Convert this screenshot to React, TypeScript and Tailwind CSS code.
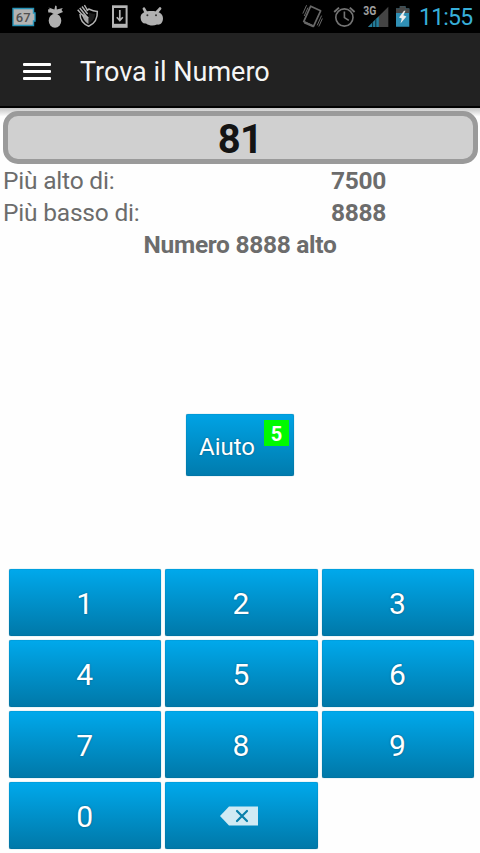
import type { ReactNode } from "react";

function StatusBar() {
  return (
    <div className="flex h-[33px] items-start justify-between bg-black pr-2">
      <div className="flex h-[33px]">
        <svg className="ml-[11px] h-[33px] w-[26px]" viewBox="11 0 26 33">
          <path d="M13 8.5H33.5V13H35V21H33.5V25.5H13Z" fill="#b3b3b3" stroke="#2794b8" strokeWidth="1.4" />
          <text x="23.2" y="21.6" textAnchor="middle" fontFamily="Roboto, sans-serif" fontSize="13" fontWeight="500" fill="#505050">67</text>
        </svg>
        <svg className="ml-[10px] h-[33px] w-[17px]" viewBox="47 0 17 33" fill="#b0b0b0">
          <ellipse cx="55" cy="20.7" rx="6.3" ry="7" />
          <path d="M54.5 14.5 51 12.4 48.3 12.4 48 9.5 50 9 48.5 7.6 54.4 9.6 55.3 5.5 56.6 6 56.8 9.6 62.8 8 61.5 10 63 12 57 14.5Z" />
        </svg>
        <svg className="ml-[13px] h-[33px] w-[22px]" viewBox="77 0 22 33" fill="none" stroke="#b3b3b3">
          <path d="M86.5 10.3 88.7 9C92 10.7 94.6 11.4 97.3 11.4C97.7 18.5 94.4 23.8 88.7 26.3C83.5 24 80 19.5 80 14" strokeWidth="1.5" />
          <path d="M88.7 12.4V23.5C93 21 94.8 18 95 13.8C92.7 13.7 90.5 13.2 88.7 12.4Z" fill="#1c1c1c" stroke="none" />
          <path d="M82 13.5 88.5 17V24C85 22 82.7 19 82 13.5Z" fill="#a5a5a5" stroke="none" />
          <path d="M77.7 9.7 84 17M79.7 8 88 18.3M82 6.5 87.6 14M84.4 5.2 88 11" strokeWidth="1.4" />
        </svg>
        <svg className="ml-[13px] h-[33px] w-[16px]" viewBox="112 0 16 33">
          <rect x="112" y="5.3" width="15.6" height="22.5" fill="#b5b5b5" />
          <rect x="114" y="8" width="11.6" height="15.8" fill="#050505" />
          <path d="M119.8 10V19.5M116.8 17.2 119.8 20.5 122.8 17.2" fill="none" stroke="#b5b5b5" strokeWidth="1.7" />
        </svg>
        <svg className="ml-[12px] h-[33px] w-[24px]" viewBox="140 0 24 33">
          <path d="M140.6 17.7C140.4 12.8 145.5 11 151.5 11C158 11 163 13.2 163 18.3C162.9 22.6 160.5 25.2 157 24.6C153.4 26 149.2 25.8 146 23.4C143 23.8 140.8 21.8 140.6 17.7Z" fill="#b1b1b1" />
          <path d="M146 12.5 144 8.8M157 12 160 8.6" stroke="#b1b1b1" strokeWidth="2.8" strokeLinecap="round" />
          <circle cx="147.4" cy="15.2" r="1" fill="#333" /><circle cx="156" cy="15.2" r="1" fill="#333" />
        </svg>
      </div>
      <div className="flex h-[33px]">
        <svg className="h-[33px] w-[22px]" viewBox="301 0 22 33" fill="none" stroke="#686868">
          <path d="M310.7 6.2 320.6 10.8 313.6 26.2 303.7 21.6Z" strokeWidth="1.7" strokeLinejoin="round" />
          <path d="M304.4 22.4 313.8 26.6" strokeWidth="2.2" />
          <path d="M306.6 5.2 302.8 13.6M308 7.6 304.2 16M321.6 15.6 317.2 25.4M322.4 18.5 318.8 26.5" strokeWidth="1" />
        </svg>
        <svg className="ml-[10px] h-[33px] w-[23px]" viewBox="333 0 23 33" fill="none" stroke="#747474">
          <circle cx="344.4" cy="17.5" r="8.6" strokeWidth="1.6" />
          <path d="M344.4 11.5V17.6L348.8 20.4" strokeWidth="1.6" />
          <path d="M334.2 12 339 7.6M349.8 7.6 354.6 12" strokeWidth="1.9" />
        </svg>
        <svg className="ml-[6px] h-[33px] w-[27px]" viewBox="362 0 27 33">
          <path d="M388.3 6.7V27H368Z" fill="#444" />
          <path d="M378.8 16.2V27H368Z" fill="#247f9e" />
          <path d="M372.6 22V27M375.8 19V27" stroke="#0c2832" strokeWidth="1" />
          <text x="363.2" y="15.4" fontFamily="Roboto, sans-serif" fontWeight="700" fontSize="12.5" fill="#a0a0a0" textLength="13" lengthAdjust="spacingAndGlyphs">3G</text>
        </svg>
        <svg className="ml-[6px] h-[33px] w-[16px]" viewBox="395 0 16 33">
          <path d="M396 8.5H399.8V6.3H405.5V8.5H409.3V26.7H396Z" fill="#3090b5" />
          <path d="M396 8.5H399.8V6.3H405.5V8.5H409.3V13H396Z" fill="#484848" />
          <path d="M404 10.8 399 17.4 401.8 18.6 400.5 23.5 406.4 16.5 403.3 15.3 405.5 10.8Z" fill="#eee" />
        </svg>
        <span className="ml-[8px] w-[53px] pt-[5px] text-[23px] leading-[26px] tracking-[-0.8px] text-[#38afd9]">11:55</span>
      </div>
    </div>
  );
}

function Key({ children }: { children: ReactNode }) {
  return (
    <button className="flex h-[67px] items-center justify-center rounded-[2px] bg-linear-to-b from-[#00a9ec] to-[#0078a8] pt-[2px] pr-[1px] text-[30px] leading-none text-white shadow-[inset_0_0_1px_#075576,0_0_1px_#4ba0c0] [text-shadow:0_0_2px_#07567a]">
      {children}
    </button>
  );
}

export default function App() {
  return (
    <div className="flex h-[853px] w-[480px] flex-col overflow-hidden bg-[#fefefe] font-[Roboto,sans-serif]">
      <StatusBar />
      <header className="flex h-[75px] items-center border-b-2 border-black bg-[#222] pt-[3px]">
        <div className="ml-[23px] flex w-[28px] flex-col gap-[4px]">
          <span className="h-[3px] rounded-[1px] bg-white" />
          <span className="h-[3px] rounded-[1px] bg-white" />
          <span className="h-[3px] rounded-[1px] bg-white" />
        </div>
        <h1 className="ml-[29px] pt-[1px] text-[27px] leading-8 text-[#f5f5f5]">Trova il Numero</h1>
      </header>
      <div className="h-[57px] shrink-0 bg-linear-to-b from-[#c5c5c5] via-[#fefefe] via-15% to-[#fefefe] px-[2.5px] pt-[2.5px]">
        <div className="flex h-[53px] items-center justify-center rounded-[15px] border-[5px] border-[#9a9a9a] bg-[#d0d0d0] pt-[5px] text-[40px] leading-none font-bold tracking-[-0.8px] text-[#141414]">81</div>
      </div>
      <section className="text-[24.5px] leading-[32px] text-[#6c6c6c]">
        <div className="flex"><span className="w-[331px] pl-[3px] tracking-[-0.2px]">Più alto di:</span><b className="tracking-[-0.3px]">7500</b></div>
        <div className="flex"><span className="w-[331px] pl-[3px] tracking-[-0.2px]">Più basso di:</span><b className="tracking-[-0.3px]">8888</b></div>
        <p className="text-center font-bold tracking-[-0.3px]">Numero 8888 alto</p>
      </section>
      <main className="flex grow flex-col justify-between pb-[4px]">
        <button className="mt-[153px] ml-[186px] flex h-[62px] w-[108px] items-start rounded-[2px] bg-linear-to-b from-[#00a3e5] to-[#007bad] text-white shadow-[inset_0_0_1px_#075576,0_0_1px_#4ba0c0]">
          <span className="mt-[17px] ml-[13px] w-[65px] text-left text-[24px] leading-[32px] [text-shadow:0_0_2px_#07567a]">Aiuto</span>
          <span className="mt-[6px] flex h-[26px] w-[25px] items-center justify-center bg-[#00fa00] pt-[1px] text-[20px] leading-none font-bold">5</span>
        </button>
        <div className="ml-[9px] grid w-[465px] grid-cols-3 gap-[4px]">
          {["1", "2", "3", "4", "5", "6", "7", "8", "9", "0"].map((n) => (
            <Key key={n}>{n}</Key>
          ))}
          <Key>
            <svg className="mr-[4px] mb-[2px] h-[20px] w-[38px]" viewBox="0 0 38 20">
              <path d="M0 10 9 .5H38V19.5H9Z" fill="#d0eaf4" />
              <path d="M17 5 27 15M27 5 17 15" stroke="#087faa" strokeWidth="2.2" strokeLinecap="round" />
            </svg>
          </Key>
        </div>
      </main>
    </div>
  );
}
